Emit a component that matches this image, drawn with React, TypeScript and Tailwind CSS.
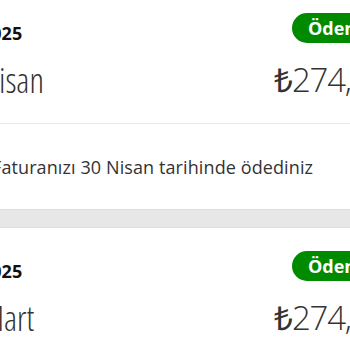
type Bill = {
  year: string;
  month: string;
  amount: string;
  status: string;
  note?: string;
};

const bills: Bill[] = [
  {
    year: "2025",
    month: "Nisan",
    amount: "274,99",
    status: "Ödendi",
    note: "Faturanızı 30 Nisan tarihinde ödediniz",
  },
  { year: "2025", month: "Mart", amount: "274,99", status: "Ödendi" },
];

function BillCard({ bill }: { bill: Bill }) {
  return (
    <div className="bg-white">
      <div className="flex justify-between px-[16px] pt-[23px] pb-[25px]">
        <div className="flex flex-col">
          <span className="mt-[10px] text-[18px] leading-[20px] font-bold [font-stretch:90%] text-[#111]">
            {bill.year}
          </span>
          <span className="mt-[19px] text-[34px] leading-[36px] font-light [font-stretch:87.5%] text-[#333]">
            {bill.month}
          </span>
        </div>
        <div className="flex flex-col items-end">
          <span className="h-[30px] flex items-center rounded-full bg-[#008a00] pl-[16px] pr-[13px] text-[18px] leading-none font-bold text-white">
            {bill.status}
          </span>
          <span className="mt-[19px] text-[33px] leading-[36px] font-light tracking-[-1.2px] text-[#333]">
            ₺{bill.amount}
          </span>
        </div>
      </div>
      {bill.note && (
        <>
          <div className="h-px bg-[#e9e9e9]" />
          <p className="pl-[27px] pr-[16px] pt-[31px] pb-[30px] text-[18px] leading-[24px] tracking-[0.1px] text-[#333]">
            {bill.note}
          </p>
        </>
      )}
    </div>
  );
}

export default function App() {
  return (
    <div className="w-[350px] h-[350px] overflow-hidden bg-white font-['Open_Sans',sans-serif]">
      <div className="-ml-[35px] -mt-[10px] w-[437px]">
        <BillCard bill={bills[0]} />
        <div className="h-[19px] bg-[#e7e7e7] border-y border-[#dddddd]" />
        <BillCard bill={bills[1]} />
      </div>
    </div>
  );
}
